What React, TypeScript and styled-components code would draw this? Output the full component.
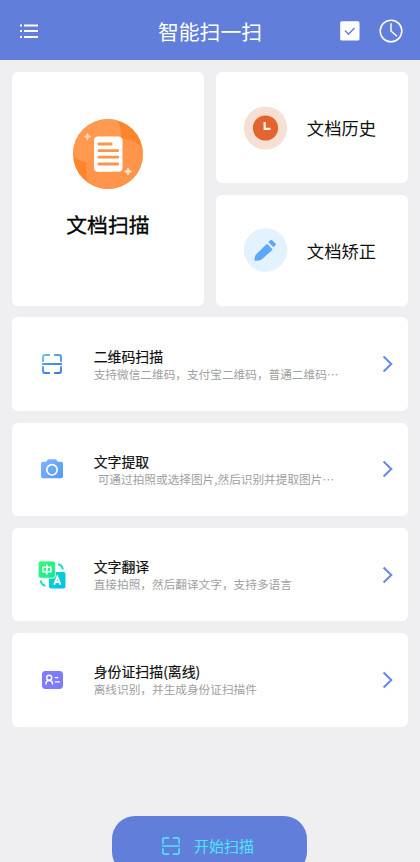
import React from 'react';
import styled, { createGlobalStyle } from 'styled-components';

const GlobalStyle = createGlobalStyle`
  * { box-sizing: border-box; }
  body { margin: 0; background: #efeff1; }
`;

const Page = styled.div`
  display: flex;
  flex-direction: column;
  width: 420px;
  height: 862px;
  overflow: hidden;
  background: #efeff1;
  color: #111;
  font-family: 'Noto Sans CJK SC', sans-serif;
`;

const Header = styled.header`
  display: grid;
  grid-template-columns: 80px 1fr 80px;
  align-items: center;
  flex: none;
  height: 60.4px;
  padding-top: 2px;
  background: #617fda;
  color: #fff;
`;

const MenuButton = styled.div`
  display: flex;
  padding-left: 20px;
`;

const Title = styled.h1`
  margin: 0;
  padding-bottom: 1px;
  text-align: center;
  font-size: 20.8px;
  line-height: 30px;
  font-weight: 400;
`;

const Actions = styled.div`
  display: flex;
  align-items: center;
  gap: 19px;
`;

const Content = styled.main`
  display: flex;
  flex-direction: column;
  flex: none;
  gap: 11.7px;
  padding: 11.7px 11.7px 0;
`;

const Tiles = styled.section`
  display: grid;
  grid-template-columns: 1fr 1fr;
  grid-template-rows: 111px 111px;
  gap: 11.7px;
`;

const Card = styled.div`
  background: #fff;
  border-radius: 6px;
`;

const MainTile = styled(Card)`
  grid-row: span 2;
  display: flex;
  flex-direction: column;
  align-items: center;
  padding-top: 46px;
`;

const MainLabel = styled.div`
  margin-top: 19px;
  font-size: 20.8px;
  line-height: 30px;
  font-weight: 400;
  -webkit-text-stroke: 0.3px #000;
  color: #000;
`;

const SideTile = styled(Card)`
  display: flex;
  align-items: center;
  gap: 19px;
  padding-left: 28px;
`;

const SideLabel = styled.div`
  padding-top: 1px;
  font-size: 17.3px;
  line-height: 26px;
`;

const Row = styled(Card)`
  display: flex;
  align-items: center;
  height: 93.5px;
  padding: 0 14px 0 26px;
`;

const RowIcon = styled.div`
  display: flex;
  justify-content: center;
  width: 29px;
  margin-right: 27px;
`;

const RowText = styled.div`
  flex: 1;
  white-space: nowrap;
`;

const RowTitle = styled.div`
  font-size: 13.9px;
  line-height: 18px;
  font-weight: 400;
  -webkit-text-stroke: 0.2px #111;
`;

const RowNote = styled.div<{ $indent?: boolean }>`
  padding-left: ${(p) => (p.$indent ? '4px' : '0')};
  font-size: 11.66px;
  line-height: 17px;
  color: #a0a0a0;
`;

const StartButton = styled.div`
  display: flex;
  flex: none;
  align-items: center;
  justify-content: center;
  gap: 14px;
  align-self: center;
  width: 195px;
  height: 59px;
  margin: 89.5px 1px 0 0;
  padding-right: 3px;
  border-radius: 23px;
  background: #617fda;
  color: #4ce5fa;
  font-size: 15px;
  line-height: 22px;
`;

const ScanIcon = ({ size, stroke }: { size: number; stroke: string }) => (
  <svg width={size} height={size} viewBox="0 0 20 20" fill="none" stroke={stroke} strokeWidth="1.8" strokeLinecap="round">
    <defs>
      <linearGradient id="scanBlue" gradientUnits="userSpaceOnUse" x1="3" y1="0" x2="15" y2="20">
        <stop offset="0" stopColor="#75bcf0" />
        <stop offset="0.5" stopColor="#3e93ec" />
        <stop offset="1" stopColor="#3778e4" />
      </linearGradient>
    </defs>
    <path d="M1 7V3Q1 1 3 1H7.2M12.8 1H17Q19 1 19 3V7M1 13V17Q1 19 3 19H7.2M12.8 19H17Q19 19 19 17V13M.8 10H19.2V10.01" />
  </svg>
);

const DocumentIcon = () => (
  <svg width="72" height="72" viewBox="0 0 72 72">
    <defs>
      <clipPath id="docDisc"><circle cx="36" cy="36" r="35" /></clipPath>
    </defs>
    <g clipPath="url(#docDisc)">
      <rect width="72" height="72" fill="#ff852c" />
      <circle cx="20" cy="16" r="29" fill="#ff9a50" />
      <circle cx="47" cy="53" r="33" fill="#ff9750" fillOpacity="0.85" />
    </g>
    <path d="M15.5 14.5l1.3 2.7 2.7 1.3-2.7 1.3-1.3 2.7-1.3-2.7-2.7-1.3 2.7-1.3Z" fill="#ffd3b3" />
    <path d="M56 49l1.4 3 3 1.4-3 1.4-1.4 3-1.4-3-3-1.4 3-1.4Z" fill="#ffe2cd" />
    <rect x="22" y="18.5" width="28.5" height="35.3" rx="4" fill="#fff" />
    <path d="M27 26h12.2M27 32.7h18.8M27 39.2h18.8M27 46h18.8" stroke="#ff944a" strokeWidth="2.8" strokeLinecap="round" />
  </svg>
);

const HistoryIcon = () => (
  <svg width="44" height="44" viewBox="0 0 44 44">
    <circle cx="21.5" cy="22" r="21.6" fill="#f8dfd4" />
    <circle cx="21.5" cy="22" r="12.6" fill="#e2652f" />
    <path d="M20.7 16v6.8h5.8" fill="none" stroke="#fff1e9" strokeWidth="2.3" />
  </svg>
);

const PencilIcon = () => (
  <svg width="44" height="44" viewBox="0 0 44 44">
    <circle cx="21.5" cy="22" r="21.8" fill="#e4f1ff" />
    <g fill="#5ca8fc">
      <path d="M22.2 16.5Q23 15.7 23.8 16.5L28 20.7Q28.8 21.5 28 22.3L17.6 31.6Q16.8 32.4 15.5 32.4L11.4 32.7Q10.3 32.8 10.4 31.7L11.2 28Q11.3 27.1 12 26.4Z" />
      <path d="M24.9 13.6L26.3 12.2Q27.2 11.3 28.1 12.2L31.4 15.5Q32.3 16.4 31.4 17.3L30 18.7Q29.4 19.3 28.7 18.6L24.9 14.8Q24.3 14.2 24.9 13.6Z" />
    </g>
  </svg>
);

const CameraIcon = () => (
  <svg width="22" height="20" viewBox="0 0 22 20">
    <defs>
      <linearGradient id="cameraBlue" x1="0" y1="0" x2="1" y2="1">
        <stop stopColor="#82b6ff" /><stop offset="1" stopColor="#5597fb" />
      </linearGradient>
    </defs>
    <path d="M1.8 2.7H5L6.5.9Q7 .3 7.8.3H14.2Q15 .3 15.5.9L17 2.7H20.2Q22 2.7 22 4.5V17.5Q22 19.3 20.2 19.3H1.8Q0 19.3 0 17.5V4.5Q0 2.7 1.8 2.7Z" fill="url(#cameraBlue)" />
    <circle cx="11" cy="10.8" r="5.2" fill="none" stroke="#fff" strokeWidth="1.7" />
  </svg>
);

const TranslateIcon = () => (
  <svg width="28" height="28" viewBox="0 0 28 28">
    <defs>
      <linearGradient id="translateGreen" x1="0" y1="0" x2="1" y2="1">
        <stop stopColor="#35ff68" /><stop offset="1" stopColor="#11e5a1" />
      </linearGradient>
      <linearGradient id="translateCyan" x1="0" y1="0" x2="1" y2="1">
        <stop stopColor="#0ad9b7" /><stop offset="1" stopColor="#04bdf7" />
      </linearGradient>
    </defs>
    <rect x="11" y="11" width="16.5" height="16.5" rx="2" fill="url(#translateCyan)" />
    <rect x=".2" y="0" width="17.2" height="17.2" rx="2.5" fill="url(#translateGreen)" stroke="#fff" strokeWidth=".8" />
    <path d="M20 3.2Q24.3 4 24.8 8.5M2.8 19.3Q3.4 24 7.5 24.8" fill="none" stroke="#19dfb2" strokeWidth="2" />
    <g fill="none" stroke="#fff">
      <path d="M4.8 6.2h8v4.5h-8ZM8.8 3.6v9.8" strokeWidth="1.6" />
      <path d="M16.2 23.6L19.3 15.8 22.4 23.6M17.3 21h4" strokeWidth="1.8" />
    </g>
  </svg>
);

const IdCardIcon = () => (
  <svg width="21" height="18" viewBox="0 0 21 18">
    <rect width="21" height="18" rx="3.4" fill="#7d7cff" />
    <g fill="none" stroke="#fff" strokeWidth="1.4" strokeLinecap="round">
      <circle cx="7.2" cy="6.7" r="2.5" />
      <path d="M3.9 13Q4 9.5 7.2 9.5T10.5 13M13.2 6.6h2.6M13.2 10.9h4.2" />
    </g>
  </svg>
);

const Chevron = () => (
  <svg width="12" height="18" viewBox="0 0 12 18" fill="none" stroke="#6487e8" strokeWidth="2">
    <path d="M1.6 1.5L9.3 9 1.6 16.5" />
  </svg>
);

const rows = [
  { icon: <ScanIcon size={20} stroke="url(#scanBlue)" />, title: '二维码扫描', note: '支持微信二维码，支付宝二维码，普通二维码…' },
  { icon: <CameraIcon />, title: '文字提取', note: '可通过拍照或选择图片,然后识别并提取图片…', indent: true },
  { icon: <TranslateIcon />, title: '文字翻译', note: '直接拍照，然后翻译文字，支持多语言' },
  { icon: <IdCardIcon />, title: '身份证扫描(离线)', note: '离线识别，并生成身份证扫描件' },
];

export default function App() {
  return (
    <Page lang="zh-CN">
      <GlobalStyle />
      <Header>
        <MenuButton>
          <svg width="19" height="16" viewBox="0 0 19 16" stroke="#fff" strokeWidth="2">
            <path d="M0 2.4h2M4 2.4h14M0 8.1h2M4 8.1h14M0 13.9h2M4 13.9h14" />
          </svg>
        </MenuButton>
        <Title>智能扫一扫</Title>
        <Actions>
          <svg width="20" height="20" viewBox="0 0 20 20">
            <rect x=".2" y=".3" width="19.3" height="19.3" rx="1.6" fill="#fff" />
            <path d="M5 9.6l3.5 3.7 6-6.2" fill="none" stroke="#617fda" strokeWidth="1.4" />
          </svg>
          <svg width="24" height="24" viewBox="0 0 24 24" fill="none" stroke="#fff" strokeWidth="1.5">
            <circle cx="12" cy="12" r="10.8" />
            <path d="M12 4.3V12l6 5.3" />
          </svg>
        </Actions>
      </Header>
      <Content>
        <Tiles>
          <MainTile>
            <DocumentIcon />
            <MainLabel>文档扫描</MainLabel>
          </MainTile>
          <SideTile>
            <HistoryIcon />
            <SideLabel>文档历史</SideLabel>
          </SideTile>
          <SideTile>
            <PencilIcon />
            <SideLabel>文档矫正</SideLabel>
          </SideTile>
        </Tiles>
        {rows.map((row) => (
          <Row key={row.title}>
            <RowIcon>{row.icon}</RowIcon>
            <RowText>
              <RowTitle>{row.title}</RowTitle>
              <RowNote $indent={row.indent}>{row.note}</RowNote>
            </RowText>
            <Chevron />
          </Row>
        ))}
      </Content>
      <StartButton>
        <ScanIcon size={18} stroke="#4ce5fa" />
        开始扫描
      </StartButton>
    </Page>
  );
}
